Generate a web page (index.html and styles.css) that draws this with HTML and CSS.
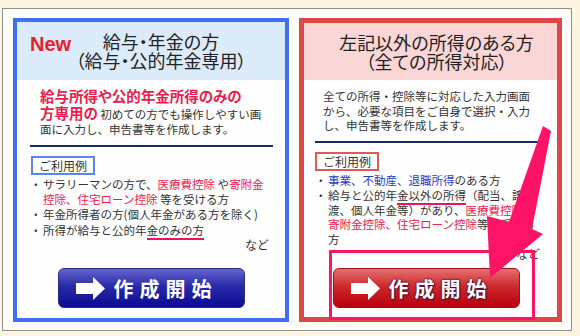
FILE: index.html
```html
<!DOCTYPE html>
<html lang="ja">
<head>
    <meta charset="UTF-8">
    <meta name="viewport" content="width=device-width, initial-scale=1.0">
    <title>申告書等作成コーナー</title>
    <link rel="stylesheet" href="styles.css">
</head>
<body>
    <div class="frame">
        <div class="panel panel-blue">
            <div class="panel-head">
                <span class="new">New</span>
                <h2 class="title">給与・年金の方<br>（給与・公的年金専用）</h2>
            </div>
            <div class="panel-body">
                <p class="intro"><strong class="lead">給与所得や公的年金所得のみの<br>方専用の</strong> 初めての方でも操作しやすい画<br>面に入力し、申告書等を作成します。</p>
                <hr class="rule">
                <span class="example">ご利用例</span>
                <ul class="cases">
                    <li>サラリーマンの方で、<em class="red">医療費控除</em> や<em class="red">寄附金<br>控除、住宅ローン控除</em> 等を受ける方</li>
                    <li>年金所得者の方(個人年金がある方を除く)</li>
                    <li>所得が給与と公的年<span class="mark">金のみの方</span></li>
                </ul>
                <p class="etc">など</p>
                <a class="start" href="#">
                    <svg class="start-arrow" viewBox="0 0 29 23" width="29" height="23">
                        <path d="M0 6 H17 V0 L29 11.5 L17 23 V17 H0 Z" fill="#fff"/>
                    </svg>
                    <span class="start-label">作成開始</span>
                </a>
            </div>
        </div>

        <div class="panel panel-red">
            <div class="panel-head">
                <h2 class="title">左記以外の所得のある方<br>（全ての所得対応）</h2>
            </div>
            <div class="panel-body">
                <p class="intro">全ての所得・控除等に対応した入力画面<br>から、必要な項目をご自身で選択・入力<br>し、申告書等を作成します。</p>
                <hr class="rule">
                <span class="example">ご利用例</span>
                <ul class="cases">
                    <li><em class="blue">事業、不動産、退職所得</em>のある方</li>
                    <li>給与と公的年<span class="mark">金以外の所得</span>（配当、譲<br>渡、個人年金等）があり、<em class="red">医療費控除</em>や<br><em class="red">寄附金控除、住宅ローン控除</em>等を受ける<br>方</li>
                </ul>
                <p class="etc">など</p>
                <a class="start" href="#">
                    <svg class="start-arrow" viewBox="0 0 29 23" width="29" height="23">
                        <path d="M0 6 H17 V0 L29 11.5 L17 23 V17 H0 Z" fill="#fff"/>
                    </svg>
                    <span class="start-label">作成開始</span>
                </a>
            </div>
            <div class="highlight"></div>
        </div>
    </div>

    <!-- 注目矢印 -->
    <svg class="pointer" viewBox="0 0 580 336" width="580" height="336">
        <polygon points="543,126 551,131 532,229 543,234 490,278 487,216 509,222" fill="#fe1466"/>
    </svg>
</body>
</html>
```

FILE: styles.css
```css
body {
    margin: 0;
    background-color: #fcf5e1;
    font-family: "Noto Sans CJK JP", sans-serif;
    color: #333;
    position: relative;
    width: 580px;
    height: 336px;
    overflow: hidden;
}
.frame {
    box-sizing: border-box;
    margin: 8px 0 0 2px;
    width: 570px;
    height: 323px;
    border: 1px solid #8f8f8f;
    background: #fdfdf8;
    padding: 9px 9px 0 10px;
    display: flex;
    gap: 10px;
}
.panel {
    box-sizing: border-box;
    height: 304px;
    display: flex;
    flex-direction: column;
    background: #fefefe;
    position: relative;
}
.panel-blue {
    width: 276px;
    border: 4px solid #3f6ff2;
}
.panel-red {
    width: 263px;
    border: 5px solid #dc4848;
}
.panel-head {
    display: flex;
    align-items: center;
    flex-shrink: 0;
}
.panel-blue .panel-head {
    height: 58px;
    background: #dcebf9;
}
.panel-red .panel-head {
    height: 57px;
    background: #fad6d6;
}
.new {
    width: 40px;
    margin-left: 13px;
    margin-top: -14px;
    font-family: "Liberation Sans", Arial, sans-serif;
    font-weight: bold;
    font-size: 20px;
    color: #e5222a;
}
.title {
    flex: 1;
    margin: 0;
    font-size: 18px;
    font-weight: normal;
    font-feature-settings: "palt";
    line-height: 19px;
    text-align: center;
    color: #222;
}
.panel-blue .title {
    padding-right: 33px;
}
.panel-red .title {
    padding-left: 12px;
}
.panel-body {
    flex: 1;
    display: flex;
    flex-direction: column;
    align-items: flex-start;
}
.panel-blue .panel-body {
    padding: 8px 12px 10px 13px;
}
.panel-red .panel-body {
    padding: 9px 19px 9px 11px;
}
.intro {
    margin: 0;
    font-size: 11.5px;
    line-height: 14.5px;
}
.panel-blue .intro {
    margin-left: 10px;
    line-height: 15px;
}
.panel-red .intro {
    margin-left: 8px;
}
.lead {
    font-size: 14.5px;
    font-feature-settings: "palt";
    color: #e8204f;
}
.rule {
    align-self: stretch;
    margin: 8px 0 0;
    border: none;
    height: 2px;
    background: #1c2a5c;
}
.example {
    box-sizing: border-box;
    margin-top: 9px;
    height: 19px;
    padding: 0 6px;
    font-size: 12px;
    line-height: 15px;
    background: #fff;
}
.panel-blue .example {
    margin-left: 1px;
    border: 2px solid #5a84f2;
}
.panel-red .example {
    border: 2px solid #e05858;
}
.cases {
    list-style: none;
    margin: 2px 0 0;
    padding: 0;
    font-size: 11.5px;
    line-height: 14.5px;
}
.cases li {
    padding-left: 13px;
    margin-bottom: 1px;
}
.cases li::before {
    content: "・";
    display: inline-block;
    width: 13px;
    margin-left: -13px;
}
.cases em {
    font-style: normal;
}
.red {
    color: #e8204f;
}
.blue {
    color: #2b3dc0;
}
.mark {
    border-bottom: 2px solid #ea145c;
}
.etc {
    align-self: flex-end;
    margin: 0 4px 0 0;
    font-size: 12px;
    line-height: 14px;
}
.panel-red .etc {
    margin-right: -2px;
}
.start {
    align-self: center;
    margin-top: auto;
    box-sizing: border-box;
    width: 187px;
    height: 40px;
    border-radius: 6px;
    display: flex;
    align-items: center;
    justify-content: center;
    gap: 9px;
    padding-right: 10px;
    text-decoration: none;
}
.panel-blue .start {
    background: linear-gradient(#6464cf, #2a2aa8 45%, #0b0b94);
    border: 1px solid #2c2c80;
}
.panel-red .start {
    background: linear-gradient(#e67070, #cc2a2e 45%, #bb000d);
    border: 1px solid #a0101a;
}
.start-label {
    font-size: 20px;
    font-weight: bold;
    letter-spacing: 6px;
    color: #fff;
}
.panel-red .start-label {
    text-shadow: 0 0 2px #4a1038, 0 0 2px #4a1038, 1px 1px 1px #4a1038;
}
.highlight {
    position: absolute;
    left: 25px;
    top: 227px;
    width: 206px;
    height: 70px;
    box-sizing: border-box;
    border: 3px solid #fe1466;
}
.pointer {
    position: absolute;
    left: 0;
    top: 0;
    pointer-events: none;
}
```
